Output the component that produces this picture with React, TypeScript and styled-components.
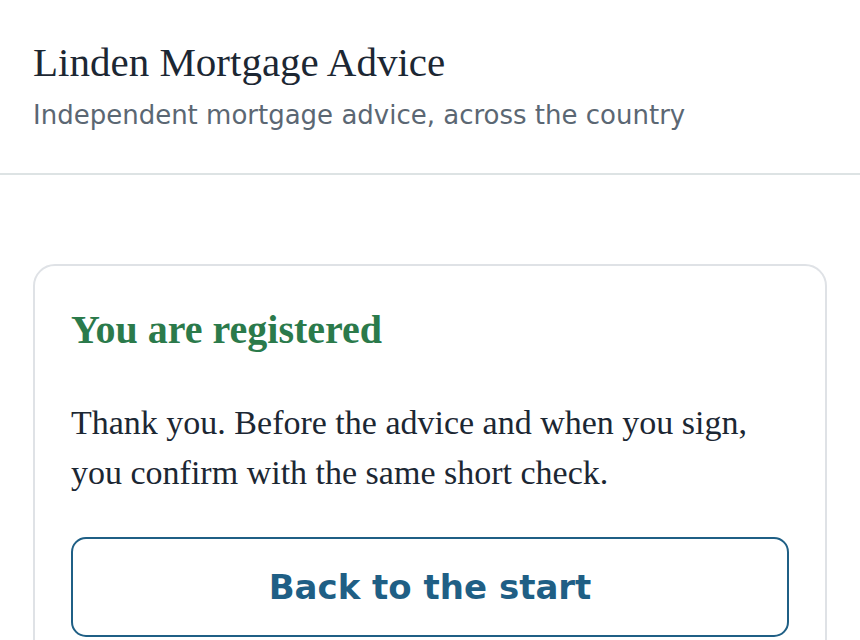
import React from 'react'
import styled, {createGlobalStyle} from 'styled-components'

const GlobalStyle = createGlobalStyle`
  * { box-sizing: border-box; }
  body {
    margin: 0;
    background: #ffffff;
    color: #1c2733;
    font-family: "DejaVu Sans", sans-serif;
  }
`

const App = () => {
  return (
    <>
      <GlobalStyle />
      <Header>
        <Brand>Linden Mortgage Advice</Brand>
        <Tagline>Independent mortgage advice, across the country</Tagline>
      </Header>

      <Main>
        <Card>
          <Title>You are registered</Title>
          <Body>
            Thank you. Before the advice and when you sign, you confirm with the same short check.
          </Body>
          <Button type='button'>Back to the start</Button>
        </Card>
      </Main>
    </>
  )
}

export default App

const Header = styled.header`
  padding: 38px 33px 39px;
  border-bottom: 2px solid #dde3e4;
`

const Brand = styled.h1`
  margin: 0;
  font-family: "Liberation Serif", serif;
  font-weight: 400;
  font-size: 41px;
  line-height: 1.2;
  color: #1c2733;
`

const Tagline = styled.p`
  margin: 10px 0 0;
  font-size: 26px;
  line-height: 1.4;
  color: #5b6773;
`

const Main = styled.main`
  padding: 89px 33px 40px;
`

const Card = styled.section`
  border: 2px solid #dfe2e6;
  border-radius: 22px;
  padding: 40px 36px 36px;
  background: #ffffff;
`

const Title = styled.h2`
  margin: 0;
  font-family: "Liberation Serif", serif;
  font-weight: 700;
  font-size: 40px;
  line-height: 1.2;
  color: #2b7a4b;
`

const Body = styled.p`
  margin: 44px 0 0;
  font-family: "Liberation Serif", serif;
  font-size: 34px;
  line-height: 50px;
  color: #1c2733;
`

const Button = styled.button`
  display: block;
  width: 100%;
  height: 100px;
  margin-top: 39px;
  background: #ffffff;
  border: 2px solid #1f5f85;
  border-radius: 15px;
  color: #1f5f85;
  font-family: "DejaVu Sans", sans-serif;
  font-weight: 700;
  font-size: 34px;
  cursor: pointer;
`
